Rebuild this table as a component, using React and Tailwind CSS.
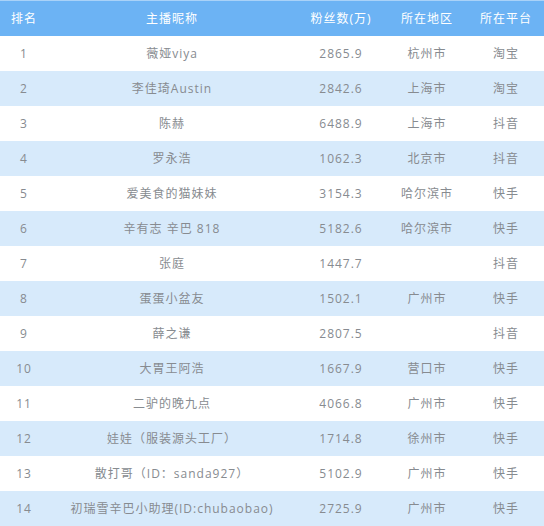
const rows = [
  ['1', '薇娅viya', '2865.9', '杭州市', '淘宝'],
  ['2', '李佳琦Austin', '2842.6', '上海市', '淘宝'],
  ['3', '陈赫', '6488.9', '上海市', '抖音'],
  ['4', '罗永浩', '1062.3', '北京市', '抖音'],
  ['5', '爱美食的猫妹妹', '3154.3', '哈尔滨市', '快手'],
  ['6', '辛有志 辛巴 818', '5182.6', '哈尔滨市', '快手'],
  ['7', '张庭', '1447.7', '', '抖音'],
  ['8', '蛋蛋小盆友', '1502.1', '广州市', '快手'],
  ['9', '薛之谦', '2807.5', '', '抖音'],
  ['10', '大胃王阿浩', '1667.9', '营口市', '快手'],
  ['11', '二驴的晚九点', '4066.8', '广州市', '快手'],
  ['12', '娃娃（服装源头工厂）', '1714.8', '徐州市', '快手'],
  ['13', '散打哥（ID：sanda927）', '5102.9', '广州市', '快手'],
  ['14', '初瑞雪辛巴小助理(ID:chubaobao)', '2725.9', '广州市', '快手'],
];

const cols = 'grid grid-cols-[48px_248px_90px_82px_76px]';

export default function App() {
  return (
    <div
      className="w-[544px] h-[526px] bg-white text-[12px] tracking-[1px]"
      style={{ fontFamily: '"Open Sans", "Noto Sans CJK SC", sans-serif' }}
    >
      <div className={`${cols} h-[36px] items-center bg-[#6cb3f4] border-t border-[#a9d2f8] text-white`}>
        <div className="text-center">排名</div>
        <div className="text-center">主播昵称</div>
        <div className="text-center">粉丝数(万)</div>
        <div className="text-center">所在地区</div>
        <div className="text-center">所在平台</div>
      </div>
      {rows.map((r, i) => (
        <div
          key={r[0]}
          className={`${cols} h-[35px] items-center text-[#878b90] ${i % 2 === 1 ? 'bg-[#d7eafb]' : 'bg-white'}`}
        >
          {r.map((c, j) => (
            <div key={j} className="text-center whitespace-nowrap">{c}</div>
          ))}
        </div>
      ))}
    </div>
  );
}
